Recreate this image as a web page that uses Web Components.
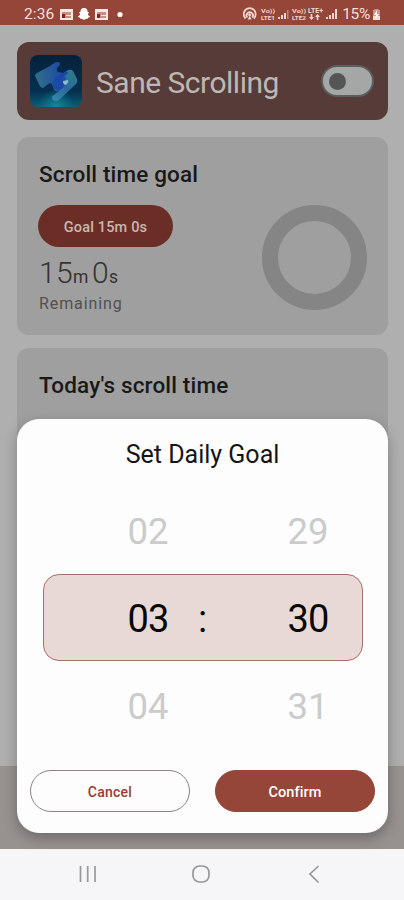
<!DOCTYPE html>
<html lang="en">
<head>
<meta charset="utf-8">
<meta name="viewport" content="width=device-width">
<title>Sane Scrolling</title>
<style>
html,body{margin:0;height:100%;overflow:hidden}
body{font-family:Roboto,"Liberation Sans",sans-serif;background:#afafaf;color:#1d1d1d}
</style>
</head>
<body>
<sane-app></sane-app>
<script>
function define(name, html){
  const t=document.createElement('template');
  t.innerHTML=html;
  customElements.define(name, class extends HTMLElement{
    constructor(){ super(); this.attachShadow({mode:'open'}).append(t.content.cloneNode(true)); }
  });
}

define('status-bar', `<style>
:host{display:flex;align-items:center;height:25px;box-sizing:border-box;padding:3px 22px 0 24px;background:#964539;color:#f7dfda;font-size:15.500px;line-height:20px}
svg{display:block}
.time{width:31px;letter-spacing:.1px}
.left{margin-left:5px}
.right{margin-left:auto;margin-right:3px}
.pct{letter-spacing:-.3px;margin-right:1px}
</style>
<span class="time">2:36</span>
<svg class="left" width="66" height="16" viewBox="0 0 66 16" fill="#f9e8e4">
<path d="M0 3h13v11H0z"/><path d="M2 6h9v6H2z" fill="#c98d84"/><path d="M2 8h3v4H2z" fill="#8b1f20"/><path d="M6 9h5v1H6z" fill="#f9e8e4"/>
<path d="M24 2c2.500 0 3.600 1.500 3.600 4l1.500.3-1.200 1.600c.5 1.600 1.300 2.300 2.400 2.700l-2 1.100-.6 1-1.700.1c-.6.600-1.100.900-2 .9s-1.400-.3-2-.9l-1.700-.1-.6-1-2-1.100c1.100-.4 1.900-1.100 2.400-2.700l-1.200-1.600 1.500-.3c0-2.500 1.100-4 3.600-4z" fill="#fff"/>
<path d="M35 3h13v11H35z"/><path d="M37 6h9v6h-9z" fill="#c98d84"/><path d="M37 8h3v4h-3z" fill="#8b1f20"/><path d="M41 9h5v1h-5z"/>
<circle cx="60" cy="8.500" r="2.600" fill="#fff"/></svg>
<svg class="right" width="96" height="16" viewBox="0 0 96 16" fill="#f3d5cf" font-family="Roboto,sans-serif" font-weight="700">
<g fill="none" stroke="#f3d5cf" stroke-width="1.800"><path d="M2.600 12.500A6 6 0 1 1 10.800 12.500"/><path d="M4.300 11.500A3.200 3.200 0 1 1 9.200 11.500"/></g><circle cx="6.700" cy="8.800" r="1.500"/><path d="M4.800 13.500l1.900-4 1.900 4z"/>
<text x="18" y="6.800" font-size="6" textLength="14" lengthAdjust="spacingAndGlyphs">Vo))</text><text x="18" y="14" font-size="6" textLength="14" lengthAdjust="spacingAndGlyphs">LTE1</text>
<path d="M35 13h2v-2h-2zM38 13h2V9h-2zM41 13h2V7h-2z"/><path d="M44 13h1.500V4H44z" opacity=".45"/>
<text x="49" y="6.800" font-size="6" textLength="14" lengthAdjust="spacingAndGlyphs">Vo))</text><text x="49" y="14" font-size="6" textLength="14" lengthAdjust="spacingAndGlyphs">LTE2</text>
<text x="65" y="6.800" font-size="7" textLength="15" lengthAdjust="spacingAndGlyphs">LTE+</text><path d="M68.500 14L66 11h1.700V8h1.600v3H71zM74.500 8l2.500 3h-1.700v3h-1.600v-3H72z"/>
<path d="M83 13h2v-2h-2zM86 13h2V9h-2zM89 13h2V7h-2zM92 13h2V3h-2z"/></svg>
<span class="pct">15%</span>
<svg width="11" height="13" viewBox="0 0 11 13"><path d="M3.500 1h4v1H9v9H2V2h1.500z" fill="#cf9389"/><path d="M2 8h7v4H2z" fill="#f7ded8"/><path d="M6 2L3 7h2l-.5 3L8 6H6z" fill="#fff"/></svg>`);

define('toggle-switch', `<style>
:host{display:flex;align-items:center;box-sizing:border-box;width:53px;height:32px;padding-left:6px;border:2px solid #5a5e5d;border-radius:16px;background:#a4a7a6}
i{width:17px;height:17px;border-radius:50%;background:#545655}
</style><i></i>`);

define('app-logo', `<style>:host{display:block;width:52px;height:52px}svg{display:block}</style>
<svg width="52" height="52" viewBox="0 0 52 52"><defs>
<linearGradient id="b" x2="0" y2="1"><stop stop-color="#05213c"/><stop offset=".7" stop-color="#06304f"/><stop offset="1" stop-color="#08607a"/></linearGradient>
<radialGradient id="g" cx=".5" cy="1" r=".35"><stop stop-color="#138b9a"/><stop offset="1" stop-color="#087992" stop-opacity="0"/></radialGradient>
<linearGradient id="l" y1=".6" x2="1" y2=".4"><stop stop-color="#30708a"/><stop offset=".45" stop-color="#275b98"/><stop offset="1" stop-color="#1a43a8"/></linearGradient>
<linearGradient id="r" x1="1" x2="0" y2="1"><stop stop-color="#2f7f82"/><stop offset=".5" stop-color="#286a9c"/><stop offset="1" stop-color="#3788a8"/></linearGradient></defs>
<rect width="52" height="52" rx="8" fill="url(#b)"/><rect width="52" height="52" rx="8" fill="url(#g)"/>
<path d="M31 20L38 15q4-1 5 1l4 8q1 3-1 5L29 45q-2 2-4 1-3-1-3-4 0-1 2-2l5-4-2-4z" fill="url(#r)"/>
<path d="M7 18L20 11q5-4 7-4 3 0 3 2 0 2-3 4-1 2 1 4l6 1 2-2 2 2-6 5 1 10-6 4-3-2-2-6q-2-2-5 1l-4 3q-2 0-3-2L5 21q0-2 2-3z" fill="url(#l)"/>
<path d="M24 24l8-6 4 5 0 7-8 6-4-3-2-5z" fill="#1b45ab" opacity=".75"/><path d="M33 26l5-1q1 2-2 5-3 0-3-4z" fill="#8bbcc9"/></svg>`);

define('app-header', `<style>
:host{display:flex;align-items:center;box-sizing:border-box;height:78px;padding:0 14px 0 13px;border-radius:12px;background:#573b38;color:#beb7b5}
span{margin-left:14px;font-size:30px;line-height:40px;letter-spacing:-.5px;padding-top:3px;white-space:nowrap}
toggle-switch{margin-left:auto}
</style><app-logo></app-logo><span><slot></slot></span><toggle-switch></toggle-switch>`);

define('info-card', `<style>
:host{display:block;box-sizing:border-box;padding:23px 21px;border-radius:12px;background:#9f9f9f}
h2{margin:0 0 0 1px;font-size:22.500px;font-weight:500;line-height:28px;letter-spacing:.15px;color:#191919;white-space:nowrap}
</style><h2><slot name="title"></slot></h2><slot></slot>`);

define('goal-progress', `<style>
:host{display:flex;justify-content:space-between;align-items:flex-start;margin-top:17px}
.pill{width:135px;height:42px;border-radius:21px;background:#6a2e26;color:#cbb6b2;display:flex;align-items:center;justify-content:center;font-size:14.500px;font-weight:500;letter-spacing:.15px;box-sizing:border-box;padding:3px 0 0 0}
.left{font-size:30px;line-height:36px;margin:8px 0 0 1px;color:#343434;letter-spacing:.4px;display:flex;align-items:baseline;white-space:nowrap;font-weight:350}
small{font-size:17.500px;font-weight:400;letter-spacing:-.4px;margin-right:4px}
.cap{font-size:16px;line-height:20px;letter-spacing:.9px;color:#505050;margin:-1px 0 0 1px}
.ring{width:105px;height:105px;box-sizing:border-box;border:16.500px solid #858585;border-radius:50%}
</style><div><div class="pill">Goal 15m 0s</div><div class="left">15<small>m</small>0<small>s</small></div><div class="cap">Remaining</div></div><div class="ring"></div>`);

define('wheel-row', `<style>
:host{display:grid;grid-template-columns:84.500px 40px 39px 1fr 40px 35.500px;align-items:center;box-sizing:border-box;height:88px;padding-top:4px;font-size:36.500px;color:#cbcbcb;line-height:44px}
:host(:last-child){padding-top:2px}
:host([selected]){font-size:38px;letter-spacing:-.8px;padding-top:2px;height:87px;margin-bottom:1px;color:#080808;background:#e9d9d6;border:1px solid #a66f69;border-radius:16px;grid-template-columns:83.500px 40px 39px 1fr 40px 34.500px}
.h{grid-column:2}.m{grid-column:5}.c{grid-column:3;text-align:right}
</style><span class="h"><slot name="h"></slot></span><span class="c"><slot></slot></span><span class="m"><slot name="m"></slot></span>`);

define('pill-button', `<style>
:host{display:flex;align-items:center;justify-content:center;box-sizing:border-box;width:160px;height:42px;border-radius:21px;border:1px solid #8a8585;color:#963c32;font-size:14px;font-weight:500;letter-spacing:.25px;padding-top:1px}
:host([filled]){background:#964539;border-color:#964539;color:#fff;font-size:14.500px;letter-spacing:.1px;padding-top:2px}
</style><slot></slot>`);

define('goal-dialog', `<style>
:host{display:flex;flex-direction:column;box-sizing:border-box;border-radius:22px;background:#fdfdfd;padding:19px 13px 21px;box-shadow:0 5px 14px rgba(0,0,0,.28)}
h1{margin:0;text-align:center;font-size:25px;line-height:32px;font-weight:400;letter-spacing:0;padding-top:1px;color:#151515}
.wheel{margin:15px 12px 0 13px}
.actions{display:flex;justify-content:space-between;margin-top:auto}
</style><h1>Set Daily Goal</h1>
<div class="wheel">
<wheel-row><span slot="h">02</span><span slot="m">29</span></wheel-row>
<wheel-row selected><span slot="h">03</span>:<span slot="m">30</span></wheel-row>
<wheel-row><span slot="h">04</span><span slot="m">31</span></wheel-row>
</div>
<div class="actions"><pill-button>Cancel</pill-button><pill-button filled>Confirm</pill-button></div>`);

define('system-nav', `<style>
:host{display:block;height:51px;background:#f6f6f8}svg{display:block}
</style><svg width="404" height="51" fill="none" stroke="#98989b" stroke-width="1.700"><path d="M80.500 17v16M87.700 17v16M95 17v16"/><rect x="193" y="17" width="16" height="16" rx="6.500"/><path d="M318.500 17L310 25l8.500 8.500"/></svg>`);

define('sane-app', `<style>
:host{display:grid;grid-template-rows:25px 1fr 51px;position:relative;width:404px;height:900px;overflow:hidden}
main{display:flex;flex-direction:column;min-height:0;overflow:hidden;padding:17px 16px 0 17px;background:linear-gradient(#afafaf 0 741px,#979290 741px)}
.goal{height:198px;margin-top:17px;flex:none}
.today{height:380px;margin-top:13px;flex:none}
app-header{flex:none}
goal-dialog{position:absolute;left:17px;top:419px;width:371px;height:414px}
</style>
<status-bar></status-bar>
<main>
<app-header>Sane Scrolling</app-header>
<info-card class="goal"><span slot="title">Scroll time goal</span><goal-progress></goal-progress></info-card>
<info-card class="today"><span slot="title">Today's scroll time</span></info-card>
</main>
<system-nav></system-nav>
<goal-dialog></goal-dialog>`);
</script>
</body>
</html>
